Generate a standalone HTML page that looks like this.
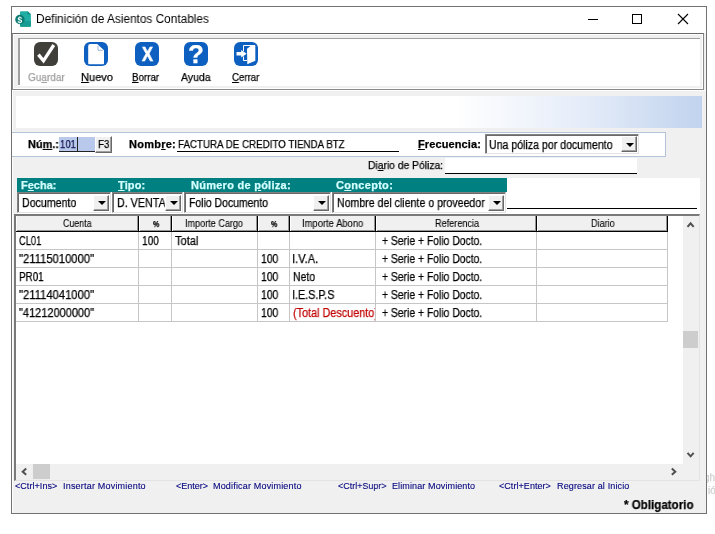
<!DOCTYPE html>
<html><head><meta charset="utf-8">
<style>
*{box-sizing:border-box;margin:0;padding:0}
html,body{width:715px;height:534px;background:#fff;overflow:hidden}
body{font-family:"Liberation Sans",sans-serif;font-size:11px;color:#000;position:relative}
.a,.x{position:absolute}
.x{white-space:nowrap;transform-origin:0 0;will-change:transform;-webkit-text-stroke:.25px}
u{text-decoration:underline}
.ic{position:absolute;top:42px;width:24px;height:24px;border-radius:6px;background:#0d5fc0}
.cb{position:absolute;background:#fff;border:1px solid #828282;border-right-color:#e3e3e3;border-bottom-color:#e3e3e3;box-shadow:inset 1px 1px 0 #696969}
.cb i{position:absolute;right:1px;bottom:1px;width:16px;height:16px;background:#f0f0f0;border:1px solid #fff;border-right-color:#696969;border-bottom-color:#696969;box-shadow:inset -1px -1px 0 #a0a0a0}
.cb i:after{content:"";position:absolute;left:3.5px;top:5px;border-left:4px solid transparent;border-right:4px solid transparent;border-top:4px solid #000}
.cb.f i:after{top:6px}
.th{position:absolute;top:216px;height:16px;background:#f0f0f0;border-right:1px solid #000;border-bottom:1px solid #000;box-shadow:inset 1px 0 0 #fff, inset -1px -1px 0 rgba(0,0,0,.38)}
.vl{position:absolute;width:1px;background:#c6c6c6;top:232px;height:90px}
.hl{position:absolute;height:1px;background:#c6c6c6;left:16px;width:652px}
</style></head><body>
<div class="x" style="left:704px;top:471.500px;font-size:10px;color:#cfcfcf;line-height:12px">gh</div>
<div class="x" style="left:708px;top:485.400px;font-size:10px;color:#cfcfcf;line-height:12px">ió</div>
<div class="a" style="left:11px;top:6px;width:696px;height:508px;border:1px solid #727272;background:#f0f0f0"></div>
<!-- title bar -->
<div class="a" style="left:12px;top:7px;width:694px;height:26px;background:#fff"></div>
<svg class="a" style="left:14px;top:10px;will-change:transform" width="18" height="18" viewBox="14 10 18 18">
  <path d="M21 11.200h6.500l3.400 3v11.500a1 1 0 0 1-1 1H21a1 1 0 0 1-1-1V12.200a1 1 0 0 1 1-1z" fill="#1fada4"/>
  <path d="M20 21h10.900v4.700a1 1 0 0 1-1 1H21a1 1 0 0 1-1-1z" fill="#169c92"/>
  <path d="M27.500 11.200l3.400 3h-3.400z" fill="#0b857a"/>
  <circle cx="19.900" cy="19.500" r="4.700" fill="#0a7a72"/>
  <text x="19.900" y="22.600" font-size="8.500" font-weight="bold" fill="#e8ffff" text-anchor="middle" font-family="Liberation Sans, sans-serif">$</text>
</svg>
<svg class="a" style="left:580px;top:8px" width="120" height="22" viewBox="580 8 120 22">
  <path d="M588 19.500h10" stroke="#000" stroke-width="1" fill="none"/>
  <rect x="632.500" y="14.500" width="9" height="9" stroke="#000" stroke-width="1" fill="none"/>
  <path d="M678 14l10 10M688 14l-10 10" stroke="#000" stroke-width="1.100" fill="none"/>
</svg>
<!-- toolbar frame -->
<div class="a" style="left:12px;top:33px;width:692px;height:57px;background:#f0f0f0;border:1px solid #8a8a8a;border-top-color:#6a6a6a;border-left-color:#8a8a8a;box-shadow:inset 0 0 0 1px #fff"></div>
<div class="a" style="left:18px;top:38px;width:682px;height:48px;background:#fff;border-top:1px solid #a0a0a0"></div>
<div class="a" style="left:18px;top:38px;width:2px;height:47px;background:#a0a0a0"></div>
<div class="a" style="left:12px;top:90px;width:694px;height:1px;background:#fff"></div>
<div class="a" style="left:12px;top:90px;width:1px;height:423px;background:#fff"></div>

<!-- icons -->
<div class="ic" style="left:34px;background:#403f39"></div>
<svg class="a" style="left:34px;top:42px" width="24" height="24" viewBox="34 42 24 24"><path d="M38.400 54.600L43.500 60.800L53.800 45" stroke="#fff" stroke-width="3.300" fill="none" stroke-linejoin="miter"/></svg>
<div class="ic" style="left:84px"></div>
<svg class="a" style="left:84px;top:42px" width="24" height="24" viewBox="84 42 24 24"><path d="M90.200 44h7l6.800 6.300v13a1 1 0 0 1-1 1H89.200a1 1 0 0 1-1-1V46a2 2 0 0 1 2-2z" fill="#fff"/><path d="M98 46v4.300h4.800" stroke="#9db3d9" stroke-width="1" fill="none"/></svg>
<div class="ic" style="left:135px"></div>
<div class="x" style="left:135px;top:42px;width:24px;height:24px;color:#fff;font-size:20.500px;font-weight:bold;text-align:center;line-height:24.500px;transform-origin:50% 50%;transform:translateX(.4px) scaleX(.8);-webkit-text-stroke:.7px #fff">X</div>
<div class="ic" style="left:184px"></div>
<div class="x" style="left:184px;top:42px;width:24px;height:24px;color:#fff;font-size:26px;font-weight:bold;text-align:center;line-height:24px">?</div>
<div class="ic" style="left:234px"></div>
<svg class="a" style="left:234px;top:42px" width="24" height="24" viewBox="234 42 24 24">
  <path d="M247 48.800L250.900 45.800L255.300 45.500V60.800L247.300 64.300z" fill="#fff"/>
  <path d="M255 45.500H243.500V51M243.500 56.500V60.500H247.200" stroke="#fff" stroke-width="1" fill="none"/>
  <path d="M236.500 52h4.700v-2l5.500 3.700l-5.500 3.700v-2h-4.700z" fill="#fff"/>
</svg>

<!-- gradient strip -->
<div class="a" style="left:16px;top:96px;width:686px;height:32px;background:linear-gradient(90deg,#fff 0%,#fff 64%,#e6edf9 82%,#c1d3ee 100%)"></div>

<!-- form panel -->
<div class="a" style="left:12px;top:132px;width:654px;height:25px;background:#fff;border:1px solid #b4c3d8;border-left:0"></div>
<div class="a" style="left:59px;top:137px;width:36px;height:14px;background:#b9c9ec"></div>
<div class="a" style="left:59px;top:151px;width:36px;height:1px;background:#222"></div>
<div class="a" style="left:77px;top:137px;width:1px;height:14px;background:#222"></div>
<div class="a" style="left:95px;top:136px;width:17px;height:17px;background:#f0f0f0;border:1px solid #fff;border-right-color:#696969;border-bottom-color:#696969;box-shadow:inset -1px -1px 0 #a0a0a0"></div>
<div class="a" style="left:177px;top:151px;width:222px;height:1px;background:#000"></div>
<div class="cb f" style="left:485px;top:134px;width:154px;height:20px"><i></i></div>

<div class="a" style="left:445px;top:158px;width:192px;height:15px;background:#fff"></div>
<div class="a" style="left:445px;top:172.500px;width:192px;height:1px;background:#000"></div>

<!-- teal bar -->
<div class="a" style="left:17px;top:178px;width:683px;height:36px;background:#fff"></div>
<div class="a" style="left:17px;top:178px;width:490px;height:14px;background:#008080"></div>
<div class="a" style="left:507px;top:207.500px;width:190px;height:1px;background:#000"></div>

<div class="cb" style="left:17px;top:192px;width:94px;height:21px"><i></i></div>
<div class="cb" style="left:112px;top:192px;width:71px;height:21px"><i></i></div>
<div class="cb" style="left:184px;top:192px;width:147px;height:21px"><i></i></div>
<div class="cb" style="left:332px;top:192px;width:174px;height:21px"><i></i></div>

<!-- grid -->
<div class="a" style="left:14px;top:214px;width:686px;height:267px;background:#fff;border-left:2px solid #7a7a7a;border-top:2px solid #7a7a7a;border-right:1px solid #e3e3e3;border-bottom:1px solid #e3e3e3"></div>
<div class="th" style="left:16px;width:123px"></div>
<div class="th" style="left:139px;width:33px"></div>
<div class="th" style="left:172px;width:86px"></div>
<div class="th" style="left:258px;width:32px"></div>
<div class="th" style="left:290px;width:86px"></div>
<div class="th" style="left:376px;width:161px"></div>
<div class="th" style="left:537px;width:131px"></div>
<div class="vl" style="left:138px"></div><div class="vl" style="left:171px"></div><div class="vl" style="left:257px"></div><div class="vl" style="left:289px"></div><div class="vl" style="left:375px"></div><div class="vl" style="left:536px"></div><div class="vl" style="left:667px"></div>
<div class="hl" style="top:249px"></div><div class="hl" style="top:267px"></div><div class="hl" style="top:285px"></div><div class="hl" style="top:303px"></div><div class="hl" style="top:321px"></div>

<!-- scrollbars -->
<div class="a" style="left:683px;top:216px;width:16px;height:264px;background:#f0f0f0"></div>
<div class="a" style="left:683px;top:331px;width:15px;height:17px;background:#cdcdcd"></div>
<div class="a" style="left:16px;top:464px;width:683px;height:16px;background:#f0f0f0"></div>
<div class="a" style="left:33px;top:464px;width:17px;height:15px;background:#cdcdcd"></div>
<svg class="a" style="left:683px;top:216px" width="16" height="264" viewBox="683 216 16 264"><path d="M687.500 226.800l3.100-3.500 3.100 3.500M687.500 452.800l3.100 3.500 3.100-3.500" stroke="#505050" stroke-width="2" fill="none"/></svg>
<svg class="a" style="left:16px;top:464px" width="683" height="16" viewBox="16 464 683 16"><path d="M26.200 468.600l-3.500 3.100 3.500 3.100M671.800 468.600l3.500 3.100-3.500 3.100" stroke="#505050" stroke-width="2" fill="none"/></svg>

<div class="x" style="left:36.40px;top:11.00px;font-size:12px;line-height:16px;transform:scaleX(0.9852);-webkit-text-stroke:0">Definición de Asientos Contables</div>
<div class="x" style="left:27.60px;top:70.00px;font-size:11.5px;line-height:14px;transform:scaleX(0.8712);color:#a0a0a0">Gu<u>a</u>rdar</div>
<div class="x" style="left:80.50px;top:70.00px;font-size:11.5px;line-height:14px;transform:scaleX(0.9651)"><u>N</u>uevo</div>
<div class="x" style="left:132.30px;top:70.00px;font-size:11.5px;line-height:14px;transform:scaleX(0.8499)"><u>B</u>orrar</div>
<div class="x" style="left:181.20px;top:70.00px;font-size:11.5px;line-height:14px;transform:scaleX(0.9150)">Ayuda</div>
<div class="x" style="left:232.40px;top:70.00px;font-size:11.5px;line-height:14px;transform:scaleX(0.8396)"><u>C</u>errar</div>
<div class="x" style="left:27.60px;top:137.00px;font-size:11px;line-height:14px;transform:scaleX(0.9902);font-weight:bold">Nú<u>m</u>.:</div>
<div class="x" style="left:60.30px;top:137.00px;font-size:11.5px;line-height:14px;transform:scaleX(0.8302);color:#10104a">101</div>
<div class="x" style="left:97.50px;top:137.00px;font-size:11.5px;line-height:14px;transform:scaleX(0.8522)">F3</div>
<div class="x" style="left:128.80px;top:137.00px;font-size:11px;line-height:14px;letter-spacing:0.240px;font-weight:bold">Nomb<u>r</u>e:</div>
<div class="x" style="left:177.60px;top:137.00px;font-size:11.5px;line-height:14px;transform:scaleX(0.8487)">FACTURA DE CREDITO TIENDA BTZ</div>
<div class="x" style="left:417.50px;top:137.00px;font-size:11px;line-height:14px;letter-spacing:0.112px;font-weight:bold"><u>F</u>recuencia:</div>
<div class="x" style="left:489.40px;top:137.00px;font-size:12px;line-height:16px;transform:scaleX(0.8817)">Una póliza por documento</div>
<div class="x" style="left:367.70px;top:158.00px;font-size:11px;line-height:14px;transform:scaleX(0.9371)">Di<u>a</u>rio de Póliza:</div>
<div class="x" style="left:20.80px;top:178.00px;font-size:11px;line-height:14px;transform:scaleX(0.9945);font-weight:bold;color:#d4ffff">F<u>e</u>cha:</div>
<div class="x" style="left:118.40px;top:178.00px;font-size:11px;line-height:14px;letter-spacing:0.146px;font-weight:bold;color:#d4ffff"><u>T</u>ipo:</div>
<div class="x" style="left:190.60px;top:178.00px;font-size:11px;line-height:14px;letter-spacing:0.264px;font-weight:bold;color:#d4ffff">Número de <u>p</u>óliza:</div>
<div class="x" style="left:335.50px;top:178.00px;font-size:11px;line-height:14px;letter-spacing:0.298px;font-weight:bold;color:#d4ffff">C<u>o</u>ncepto:</div>
<div class="x" style="left:21.70px;top:195.00px;font-size:12px;line-height:16px;transform:scaleX(0.8851)">Documento</div>
<div class="x" style="left:188.80px;top:195.00px;font-size:12px;line-height:16px;transform:scaleX(0.8711)">Folio Documento</div>
<div class="x" style="left:336.70px;top:195.00px;font-size:12px;line-height:16px;transform:scaleX(0.8822)">Nombre del cliente o proveedor</div>
<div class="x" style="left:62.90px;top:217.00px;font-size:10px;line-height:13px;transform:scaleX(0.8842);-webkit-text-stroke:.1px">Cuenta</div>
<div class="x" style="left:152.70px;top:218.00px;font-size:8.5px;line-height:12px;transform:scaleX(0.8250);font-weight:bold">%</div>
<div class="x" style="left:184.90px;top:217.00px;font-size:10px;line-height:13px;transform:scaleX(0.9075);-webkit-text-stroke:.1px">Importe Cargo</div>
<div class="x" style="left:271.00px;top:218.00px;font-size:8.5px;line-height:12px;transform:scaleX(0.8250);font-weight:bold">%</div>
<div class="x" style="left:301.60px;top:217.00px;font-size:10px;line-height:13px;transform:scaleX(0.9419);-webkit-text-stroke:.1px">Importe Abono</div>
<div class="x" style="left:435.00px;top:217.00px;font-size:10px;line-height:13px;transform:scaleX(0.9119);-webkit-text-stroke:.1px">Referencia</div>
<div class="x" style="left:590.80px;top:217.00px;font-size:10px;line-height:13px;transform:scaleX(0.9075);-webkit-text-stroke:.1px">Diario</div>
<div class="x" style="left:18.80px;top:233.00px;font-size:12px;line-height:16px;transform:scaleX(0.7789)">CL01</div>
<div class="x" style="left:141.60px;top:233.00px;font-size:12px;line-height:16px;transform:scaleX(0.8453)">100</div>
<div class="x" style="left:175.20px;top:233.00px;font-size:12px;line-height:16px;transform:scaleX(0.9238)">Total</div>
<div class="x" style="left:382.10px;top:233.00px;font-size:12px;line-height:16px;transform:scaleX(0.8633)">+ Serie + Folio Docto.</div>
<div class="x" style="left:382.10px;top:251.00px;font-size:12px;line-height:16px;transform:scaleX(0.8633)">+ Serie + Folio Docto.</div>
<div class="x" style="left:382.10px;top:269.00px;font-size:12px;line-height:16px;transform:scaleX(0.8633)">+ Serie + Folio Docto.</div>
<div class="x" style="left:382.10px;top:287.00px;font-size:12px;line-height:16px;transform:scaleX(0.8633)">+ Serie + Folio Docto.</div>
<div class="x" style="left:382.10px;top:305.00px;font-size:12px;line-height:16px;transform:scaleX(0.8633)">+ Serie + Folio Docto.</div>
<div class="x" style="left:260.80px;top:251.00px;font-size:12px;line-height:16px;transform:scaleX(0.8650)">100</div>
<div class="x" style="left:260.80px;top:269.00px;font-size:12px;line-height:16px;transform:scaleX(0.8650)">100</div>
<div class="x" style="left:260.80px;top:287.00px;font-size:12px;line-height:16px;transform:scaleX(0.8650)">100</div>
<div class="x" style="left:260.80px;top:305.00px;font-size:12px;line-height:16px;transform:scaleX(0.8650)">100</div>
<div class="x" style="left:19.40px;top:251.00px;font-size:12px;line-height:16px;transform:scaleX(0.9363)">&quot;21115010000&quot;</div>
<div class="x" style="left:291.77px;top:251.00px;font-size:12px;line-height:16px;transform:scaleX(0.9254)">I.V.A.</div>
<div class="x" style="left:18.80px;top:269.00px;font-size:12px;line-height:16px;transform:scaleX(0.8206)">PR01</div>
<div class="x" style="left:292.70px;top:269.00px;font-size:12px;line-height:16px;transform:scaleX(0.8686)">Neto</div>
<div class="x" style="left:19.40px;top:287.00px;font-size:12px;line-height:16px;transform:scaleX(0.9363)">&quot;21114041000&quot;</div>
<div class="x" style="left:291.80px;top:287.00px;font-size:12px;line-height:16px;transform:scaleX(0.8995)">I.E.S.P.S</div>
<div class="x" style="left:19.40px;top:305.00px;font-size:12px;line-height:16px;transform:scaleX(0.9159)">&quot;41212000000&quot;</div>
<div class="x" style="left:14.60px;top:480.00px;font-size:9px;line-height:12px;letter-spacing:0.054px;color:#00007f;-webkit-text-stroke:.1px">&lt;Ctrl+Ins&gt;</div>
<div class="x" style="left:63.40px;top:480.00px;font-size:9px;line-height:12px;letter-spacing:0.199px;color:#00007f;-webkit-text-stroke:.1px">Insertar Movimiento</div>
<div class="x" style="left:175.50px;top:480.00px;font-size:9px;line-height:12px;letter-spacing:0.005px;color:#00007f;-webkit-text-stroke:.1px">&lt;Enter&gt;</div>
<div class="x" style="left:213.30px;top:480.00px;font-size:9px;line-height:12px;letter-spacing:0.178px;color:#00007f;-webkit-text-stroke:.1px">Modificar Movimiento</div>
<div class="x" style="left:337.60px;top:480.00px;font-size:9px;line-height:12px;transform:scaleX(0.9955);color:#00007f;-webkit-text-stroke:.1px">&lt;Ctrl+Supr&gt;</div>
<div class="x" style="left:392.40px;top:480.00px;font-size:9px;line-height:12px;letter-spacing:0.116px;color:#00007f;-webkit-text-stroke:.1px">Eliminar Movimiento</div>
<div class="x" style="left:498.80px;top:480.00px;font-size:9px;line-height:12px;letter-spacing:0.053px;color:#00007f;-webkit-text-stroke:.1px">&lt;Ctrl+Enter&gt;</div>
<div class="x" style="left:556.70px;top:480.00px;font-size:9px;line-height:12px;letter-spacing:0.134px;color:#00007f;-webkit-text-stroke:.1px">Regresar al Inicio</div>
<div class="x" style="left:623.80px;top:497.00px;font-size:12px;line-height:16px;transform:scaleX(0.9655);font-weight:bold">* Obligatorio</div>
<div class="x" style="left:115px;top:195.00px;width:49.5px;height:16px;overflow:hidden"><div class="x" style="left:1.90px;top:0;font-size:12px;line-height:16px;transform:scaleX(0.8936)">D. VENTA</div></div>
<div class="x" style="left:290px;top:305.00px;width:84.60000000000002px;height:16px;overflow:hidden"><div class="x" style="left:2.70px;top:0;font-size:12px;line-height:16px;transform:scaleX(0.9029);color:#c00000">(Total Descuento)</div></div>
</body></html>
